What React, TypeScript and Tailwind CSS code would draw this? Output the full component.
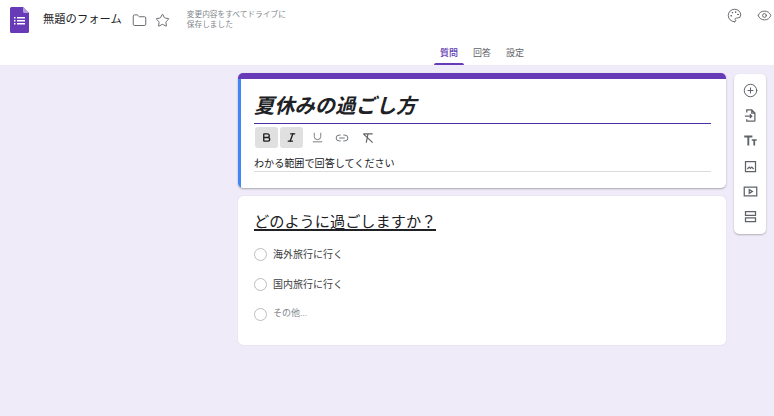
import { Folder, Star, Palette, Eye, Bold, Italic, Underline, Link2, CirclePlus } from 'lucide-react';

const font = "font-['Roboto','Noto_Sans_CJK_JP',sans-serif]";

const FormsLogo = () => (
  <svg width="19" height="26" viewBox="0 0 19 26" className="block">
    <path d="M1.500 0H13l6 6v18.500a1.500 1.500 0 0 1-1.500 1.500h-16A1.500 1.500 0 0 1 0 24.500v-23A1.500 1.500 0 0 1 1.500 0z" fill="#673ab7" />
    <path d="M13 0l6 6h-4.500A1.500 1.500 0 0 1 13 4.500z" fill="#b39ddb" />
    <g fill="#fff">
      <rect x="4" y="10" width="1.500" height="1.500" />
      <rect x="7" y="10" width="8" height="1.500" />
      <rect x="4" y="13" width="1.500" height="1.500" />
      <rect x="7" y="13" width="8" height="1.500" />
      <rect x="4" y="16" width="1.500" height="1.500" />
      <rect x="7" y="16" width="8" height="1.500" />
    </g>
  </svg>
);

const SideIcon = ({ d }: { d: string }) => (
  <svg width="15" height="15" viewBox="0 0 24 24" fill="none" stroke="#5f6368" strokeWidth="2" className="block">
    <path d={d} />
  </svg>
);

const ClearFormat = () => (
  <svg width="14" height="14" viewBox="0 0 24 24" fill="none" stroke="#5f6368" strokeWidth="2" className="block">
    <path d="M4 5h16M12 5l-3 15M4 5l16 15" />
  </svg>
);

const Radio = () => <span className="block w-[13px] h-[13px] rounded-full border border-[#bdbdbd] shrink-0" />;

const App = () => {
  return (
    <div className={`w-[774px] h-[416px] overflow-hidden bg-[#f0ebf8] flex flex-col ${font}`}>
      {/* Header */}
      <header className="h-[65px] bg-white shrink-0 flex flex-col">
        <div className="h-[44px] flex items-start pl-[10px] pt-[7px]">
          <FormsLogo />
          <span className="ml-[14px] mt-[5px] text-[11.3px] leading-[16px] text-[#202124]">無題のフォーム</span>
          <Folder size={15} strokeWidth={1.5} className="ml-[10px] mt-[6px] text-[#5f6368]" />
          <Star size={15} strokeWidth={1.5} className="ml-[8px] mt-[6px] text-[#5f6368]" />
          <span className="ml-[17px] mt-[3px] w-[104px] text-[7.7px] leading-[10px] text-[#80868b]">変更内容をすべてドライブに保存しました</span>
          <div className="ml-auto flex items-center gap-[15px] mt-[1px] pr-[2px]">
            <Palette size={15} strokeWidth={1.5} className="text-[#5f6368]" />
            <Eye size={15} strokeWidth={1.5} className="text-[#5f6368]" />
          </div>
        </div>
        <nav className="flex h-[21px] pl-[434px] text-[9px] leading-[12px]">
          <div className="w-[30px] flex flex-col items-center justify-between text-[#5e35b1] font-medium">
            <span className="mt-[3px]">質問</span>
            <span className="block w-full h-[2px] bg-[#673ab7] rounded-t-sm" />
          </div>
          <span className="mt-[3px] ml-[9px] text-[#5f6368]">回答</span>
          <span className="mt-[3px] ml-[15px] text-[#5f6368]">設定</span>
        </nav>
      </header>

      {/* Body */}
      <main className="flex items-start pl-[238px] pt-[8px] gap-[8px]">
        <div className="w-[488px] flex flex-col gap-[8px]">
          {/* Title card */}
          <section className="h-[115px] rounded-[5px] bg-white shadow-[0_1px_2px_rgba(60,64,67,0.4)] overflow-hidden flex flex-col">
            <div className="h-[6px] bg-[#673ab7] shrink-0" />
            <div className="flex-1 border-l-[3px] border-[#4285f4] pl-[13px] pr-[15px] flex flex-col">
              <h1 className="mt-[14px] h-[27px] text-[20.3px] leading-[27px] font-bold italic text-[#202124]">夏休みの過ごし方</h1>
              <div className="h-[1px] mt-[3px] bg-[#4a2fa0]" />
              <div className="flex items-center mt-[3px] gap-[2.3px] pl-[1px]">
                <span className="w-[23px] h-[21px] rounded-[3px] bg-[#e0e0e0] flex items-center justify-center"><Bold size={11} strokeWidth={3} className="text-[#202124]" /></span>
                <span className="w-[23px] h-[21px] rounded-[3px] bg-[#e0e0e0] flex items-center justify-center"><Italic size={11} strokeWidth={3} className="text-[#202124]" /></span>
                <span className="w-[23px] h-[21px] flex items-center justify-center"><Underline size={13} strokeWidth={1.5} className="text-[#5f6368]" /></span>
                <span className="w-[23px] h-[21px] flex items-center justify-center"><Link2 size={14} strokeWidth={1.5} className="text-[#5f6368]" /></span>
                <span className="w-[23px] h-[21px] flex items-center justify-center"><ClearFormat /></span>
              </div>
              <div className="mt-[8px] h-[16px] border-b border-[#dadce0] text-[10.1px] leading-[15px] text-[#202124]">わかる範囲で回答してください</div>
            </div>
          </section>

          {/* Question card */}
          <section className="h-[149px] rounded-[5px] bg-white shadow-[0_0_1px_rgba(60,64,67,0.25)] pl-[16px] pt-[19px]">
            <span className="block w-fit text-[15.2px] leading-[14px] text-[#202124] border-b-2 border-[#202124]">どのように過ごしますか？</span>
            <div className="mt-[8px] flex flex-col">
              <div className="h-[30px] flex items-center gap-[6px] text-[10px] text-[#3c4043]"><Radio /><span>海外旅行に行く</span></div>
              <div className="h-[30px] flex items-center gap-[6px] text-[10px] text-[#3c4043]"><Radio /><span>国内旅行に行く</span></div>
              <div className="h-[30px] flex items-center gap-[6px] text-[9px] text-[#80868b]"><Radio /><span>その他...</span></div>
            </div>
          </section>
        </div>

        {/* Side toolbar */}
        <aside className="mt-[1px] w-[32px] h-[160px] rounded-[5px] bg-white shadow-[0_1px_2px_rgba(60,64,67,0.35)] flex flex-col items-center pt-[8.5px] gap-[10.4px]">
          <CirclePlus size={15} strokeWidth={1.6} className="text-[#5f6368]" />
          <SideIcon d="M6 7V3h8l5 5v12a1 1 0 0 1-1 1H6v-3M3 13h11M11 10l3 3-3 3M14 3v5h5" />
          <svg width="15" height="15" viewBox="0 0 24 24" fill="#5f6368" className="block">
            <path d="M2 4h13v3H10v13H7V7H2z" />
            <path d="M14 10h8v2.500h-2.600V20h-2.800v-7.500H14z" />
          </svg>
          <SideIcon d="M4 4h16v16H4zM7 16l3-3 2 2 2-2 3 3" />
          <SideIcon d="M2 5h20v14H2zM10 9v6l5-3z" />
          <SideIcon d="M4 4h16v6H4zM4 14h16v6H4z" />
        </aside>
      </main>
    </div>
  );
};

export default App;
